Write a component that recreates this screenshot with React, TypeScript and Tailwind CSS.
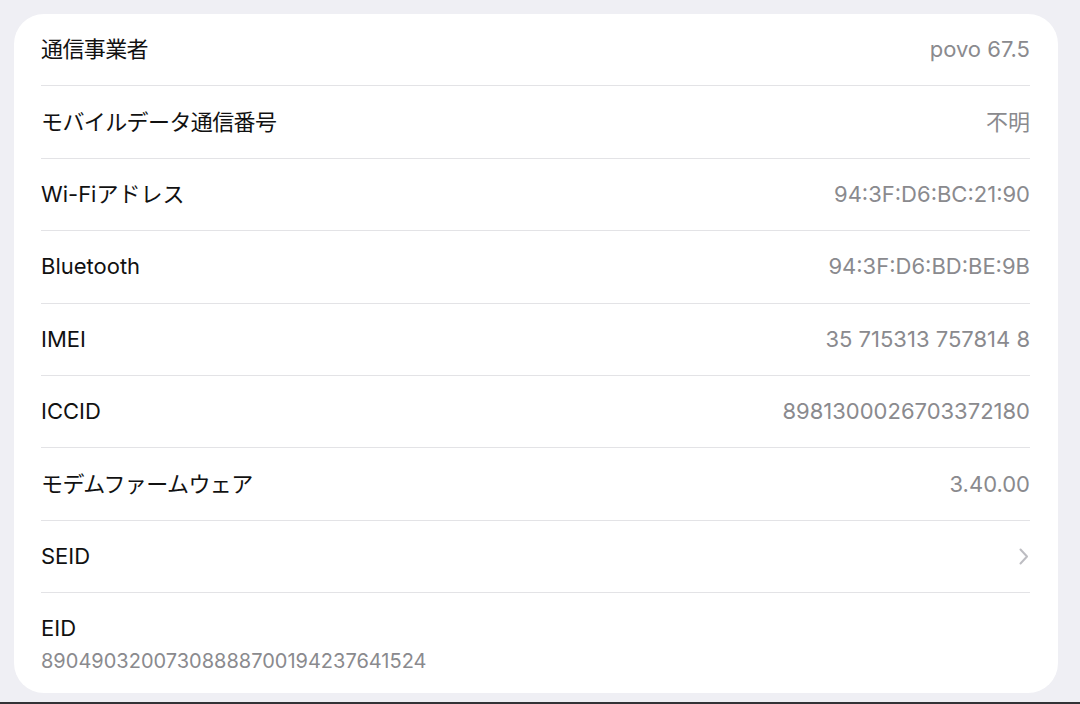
import React from 'react';

interface InfoRow {
  label: string;
  value?: string;
  chevron?: boolean;
  cjk?: boolean;
}

const rows: InfoRow[] = [
  { label: '通信事業者', value: 'povo 67.5', cjk: true },
  { label: 'モバイルデータ通信番号', value: '不明', cjk: true },
  { label: 'Wi-Fiアドレス', value: '94:3F:D6:BC:21:90' },
  { label: 'Bluetooth', value: '94:3F:D6:BD:BE:9B' },
  { label: 'IMEI', value: '35 715313 757814 8' },
  { label: 'ICCID', value: '8981300026703372180' },
  { label: 'モデムファームウェア', value: '3.40.00', cjk: true },
  { label: 'SEID', chevron: true },
];

const font = { fontFamily: 'Inter, "Noto Sans CJK JP", sans-serif' };

export default function App() {
  return (
    <div className="h-[704px] w-[1080px] bg-[#efeff4] flex flex-col overflow-hidden" style={font}>
      <div className="flex-1 pt-[14px] pl-[14px]">
        {/* カード */}
        <div className="w-[1044px] h-[679px] bg-white rounded-[30px] pl-[27px] pr-[28px]">
          {rows.map((row) => (
            <div
              key={row.label}
              className="h-[72.4px] flex items-center justify-between border-b border-[#e3e3e6]"
            >
              <span
                className={`text-[22px] text-[#111111] ${row.cjk ? 'tracking-[-0.6px]' : 'tracking-[0px]'}`}
              >
                {row.label}
              </span>
              {row.value && (
                <span className="text-[22px] text-[#8a8a8e]">{row.value}</span>
              )}
              {row.chevron && (
                <svg width="10" height="17" viewBox="0 0 10 17" className="mr-[1px]">
                  <path
                    d="M1.5 1.5 L8 8.5 L1.5 15.5"
                    fill="none"
                    stroke="#bdbdc2"
                    strokeWidth="2"
                    strokeLinecap="round"
                    strokeLinejoin="round"
                  />
                </svg>
              )}
            </div>
          ))}
          {/* EID */}
          <div className="pt-[20px] flex flex-col">
            <span className="text-[22px] leading-[30px] text-[#111111]">EID</span>
            <span className="text-[20px] leading-[28px] text-[#8a8a8e] mt-[4px]">
              89049032007308888700194237641524
            </span>
          </div>
        </div>
      </div>
      <div className="h-[2px] bg-[#333336]"></div>
    </div>
  );
}
